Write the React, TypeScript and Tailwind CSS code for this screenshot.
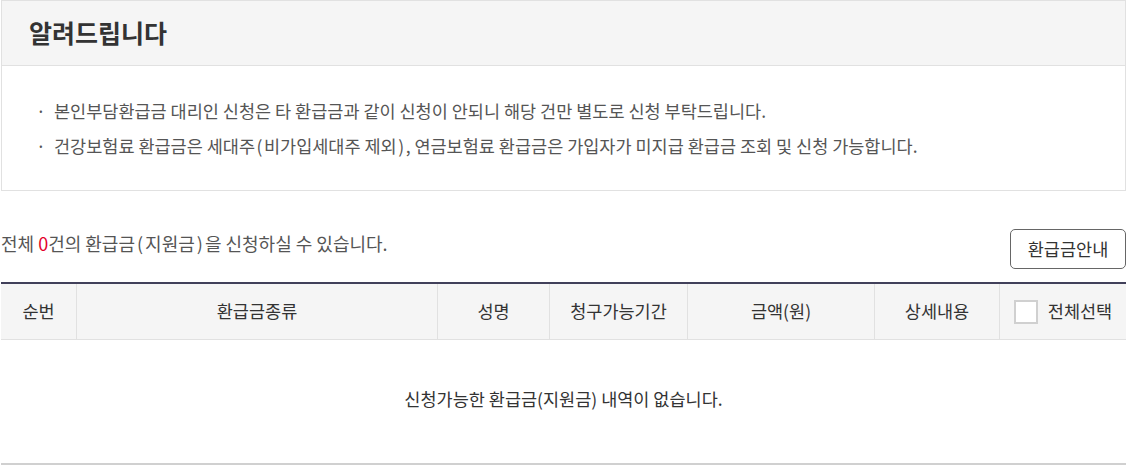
const FONT = "font-['Noto_Sans_CJK_KR','Noto_Sans',sans-serif]";

const COLUMNS = ["순번", "환급금종류", "성명", "청구가능기간", "금액(원)", "상세내용"];

// 괄호 양옆 여백 (원본 폰트의 넓은 괄호 폭 맞춤)
function Paren({ children, space }: { children: React.ReactNode; space: string }) {
  return (
    <>
      <span className={space}>(</span>
      {children}
      <span className={space}>)</span>
    </>
  );
}

export default function App() {
  return (
    <div className={`${FONT} ml-[1px] w-[1125px] bg-white text-[#333]`}>
      {/* 알림 박스 */}
      <section className="border border-[#e1e1e1]">
        <div className="flex h-[65px] items-center border-b border-[#e1e1e1] bg-[#f5f5f5] pl-[27px]">
          <h2 className="text-[25px] font-bold text-[#333]">알려드립니다</h2>
        </div>
        <ul className="py-[27px] pl-[34px] text-[17.5px] leading-[35px] text-[#555]">
          <li className="flex">
            <span className="w-[18px] flex-none">·</span>
            <span>본인부담환급금 대리인 신청은 타 환급금과 같이 신청이 안되니 해당 건만 별도로 신청 부탁드립니다.</span>
          </li>
          <li className="flex">
            <span className="w-[18px] flex-none">·</span>
            <span>
              건강보험료 환급금은 세대주<Paren space="mx-[1.5px]">비가입세대주 제외</Paren>, 연금보험료 환급금은 가입자가 미지급
              환급금 조회 및 신청 가능합니다.
            </span>
          </li>
        </ul>
      </section>

      <div className="mt-[38px] flex items-start justify-between">
        <p className="pt-[2px] text-[18px] leading-[24px] text-[#555]">
          전체 <span className="text-[#e4002b]">0</span>건의 환급금<Paren space="mx-[2px]">지원금</Paren>을 신청하실 수
          있습니다.
        </p>
        <button className="h-[40px] w-[116px] rounded-[5px] border border-[#666] text-[17.5px] text-[#333]">
          환급금안내
        </button>
      </div>

      {/* 목록 */}
      <div className="mt-[13px] border-t-2 border-[#41405a]">
        <div className="grid h-[56px] grid-cols-[76px_361px_112px_138px_187px_125px_126px] border-b border-[#e1e1e1] bg-[#f5f5f5] text-[17.5px] text-[#333]">
          {COLUMNS.map((c) => (
            <div key={c} className="flex items-center justify-center border-r border-[#e1e1e1]">
              {c}
            </div>
          ))}
          <div className="flex items-center justify-center gap-[10px]">
            <span className="h-[24px] w-[24px] border-2 border-[#d0d0d0] bg-white" />
            <span>전체선택</span>
          </div>
        </div>
        <div className="flex h-[125px] items-center justify-center border-b-2 border-[#d0d0d0] pb-[4px] text-[17.5px] text-[#333]">
          신청가능한 환급금(지원금) 내역이 없습니다.
        </div>
      </div>
    </div>
  );
}
